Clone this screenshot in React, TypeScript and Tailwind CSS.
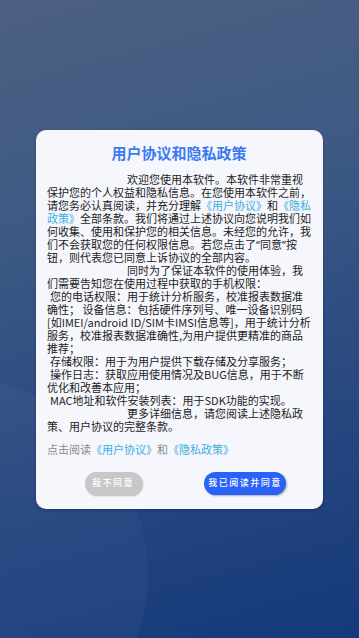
import React from "react";

const cjk = { fontFamily: '"Noto Sans CJK SC", "Noto Sans", sans-serif' };

function Link({ children }: { children: React.ReactNode }) {
  return <span className="text-[#3aaee0]">{children}</span>;
}

// narrow latin quotes, like the original
function Q({ children }: { children: React.ReactNode }) {
  return <span style={{ fontFamily: '"Noto Sans", sans-serif' }}>{children}</span>;
}

// each entry is one rendered line of the agreement text
const lines: { text: React.ReactNode; indent?: "big" | "small" }[] = [
  { text: "欢迎您使用本软件。本软件非常重视", indent: "big" },
  { text: "保护您的个人权益和隐私信息。在您使用本软件之前，" },
  {
    text: (
      <>
        请您务必认真阅读，并充分理解<Link>《用户协议》</Link>和<Link>《隐私</Link>
      </>
    ),
  },
  {
    text: (
      <>
        <Link>政策》</Link>全部条款。我们将通过上述协议向您说明我们如
      </>
    ),
  },
  { text: "何收集、使用和保护您的相关信息。未经您的允许，我" },
  {
    text: (
      <>
        们不会获取您的任何权限信息。若您点击了<Q>“</Q>同意<Q>”</Q>按
      </>
    ),
  },
  { text: "钮，则代表您已同意上诉协议的全部内容。" },
  { text: "同时为了保证本软件的使用体验，我", indent: "big" },
  { text: "们需要告知您在使用过程中获取的手机权限：" },
  { text: "您的电话权限：用于统计分析服务，校准报表数据准", indent: "small" },
  { text: "确性； 设备信息：包括硬件序列号、唯一设备识别码" },
  { text: "[如IMEI/android ID/SIM卡IMSI信息等]，用于统计分析" },
  { text: "服务，校准报表数据准确性,为用户提供更精准的商品" },
  { text: "推荐；" },
  { text: "存储权限：用于为用户提供下载存储及分享服务；", indent: "small" },
  { text: "操作日志：获取应用使用情况及BUG信息，用于不断", indent: "small" },
  { text: "优化和改善本应用；" },
  { text: "MAC地址和软件安装列表：用于SDK功能的实现。", indent: "small" },
  { text: "更多详细信息，请您阅读上述隐私政", indent: "big" },
  { text: "策、用户协议的完整条款。" },
];

export default function App() {
  return (
    <div
      className="relative flex h-[638px] w-full items-center justify-center overflow-hidden bg-[linear-gradient(165deg,#4c6082_0%,#3f5a84_30%,#24457f_72%,#153a7a_100%)]"
      style={cjk}
    >
      {/* faint decorative circle bottom-left */}
      <div className="absolute left-[-248px] top-[377px] h-[396px] w-[396px] rounded-full bg-white/[0.03]" />

      <div className="relative w-[287px] rounded-[10px] bg-[#f6f7fc] pb-[14px] pl-[11px] pr-[12px] pt-[13px] shadow-[0_1px_3px_rgba(0,0,0,0.25)]">
        <h1 className="text-center text-[15px] font-bold leading-[20px] text-[#3b7af1]">
          用户协议和隐私政策
        </h1>

        <div className="mt-[10px] text-[11px] leading-[13px] text-[#1c1c1c]">
          {lines.map((l, i) => (
            <div
              key={i}
              className={
                "whitespace-nowrap " +
                (l.indent === "big" ? "pl-[80px]" : l.indent === "small" ? "pl-[3px]" : "")
              }
            >
              {l.text}
            </div>
          ))}
        </div>

        <div className="mt-[10px] text-[11px] leading-[13px] text-[#8a8a8a]">
          点击阅读<Link>《用户协议》</Link>和<Link>《隐私政策》</Link>
        </div>

        <div className="mt-[16px] flex">
          <div className="flex flex-1 justify-center">
            <button className="flex h-[23px] w-[57px] items-center justify-center rounded-full bg-[#c8c8c8] text-[9px] font-medium tracking-[1.5px] text-white shadow-[1px_1px_2px_rgba(0,0,0,0.25)]">
              我不同意
            </button>
          </div>
          <div className="flex flex-1 justify-center">
            <button className="flex h-[23px] w-[82px] items-center justify-center rounded-full bg-[#2962f6] text-[9px] font-medium tracking-[1.5px] text-white shadow-[1px_1px_2px_rgba(0,0,0,0.3)]">
              我已阅读并同意
            </button>
          </div>
        </div>
      </div>
    </div>
  );
}
